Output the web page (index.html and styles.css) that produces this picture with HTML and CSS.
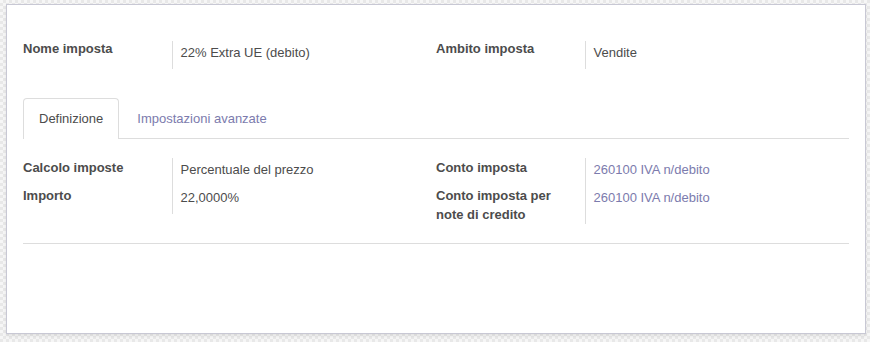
FILE: index.html
```html
<!DOCTYPE html>
<html lang="it">
<head>
<meta charset="utf-8">
<title>Imposta</title>
<link rel="stylesheet" href="styles.css">
</head>
<body>
<div class="sheet">
  <div class="group-row top-group">
    <table class="group">
      <tr>
        <td class="label"><span class="label-text">Nome imposta</span></td>
        <td class="value">22% Extra UE (debito)</td>
      </tr>
    </table>
    <table class="group">
      <tr>
        <td class="label"><span class="label-text">Ambito imposta</span></td>
        <td class="value">Vendite</td>
      </tr>
    </table>
  </div>

  <ul class="tabs">
    <li class="tab active">Definizione</li>
    <li class="tab link">Impostazioni avanzate</li>
  </ul>

  <div class="group-row tab-content">
    <table class="group">
      <tr>
        <td class="label">Calcolo imposte</td>
        <td class="value">Percentuale del prezzo</td>
      </tr>
      <tr>
        <td class="label">Importo</td>
        <td class="value">22,0000%</td>
      </tr>
    </table>
    <table class="group">
      <tr>
        <td class="label">Conto imposta</td>
        <td class="value"><a class="link">260100 IVA n/debito</a></td>
      </tr>
      <tr>
        <td class="label">Conto imposta per<br>note di credito</td>
        <td class="value"><a class="link">260100 IVA n/debito</a></td>
      </tr>
    </table>
  </div>
  <div class="rule"></div>
</div>
</body>
</html>
```

FILE: styles.css
```css
html, body {
  margin: 0;
  padding: 0;
}
body {
  width: 870px;
  height: 342px;
  overflow: hidden;
  font-family: "Liberation Sans", Arial, sans-serif;
  font-size: 13px;
  color: #4c4c4c;
  background-color: #f3f3f3;
  background-image: repeating-conic-gradient(#e8e8e8 0 25%, #f6f6f6 0 50%);
  background-size: 6px 6px;
  padding: 4px 4px 0 6px;
  box-sizing: border-box;
}
.sheet {
  box-sizing: border-box;
  width: 860px;
  height: 330px;
  background: #fff;
  border: 1px solid #c8c8d4;
  box-shadow: 0 2px 3px rgba(0, 0, 0, 0.08);
  padding: 36px 16px 0 16px;
}
.group-row {
  display: grid;
  grid-template-columns: 413px 413px;
  align-items: start;
}
.group {
  border-collapse: collapse;
  border-spacing: 0;
}
.group td {
  padding: 0;
  vertical-align: top;
  line-height: 19px;
}
.label {
  width: 149px;
  box-sizing: border-box;
  font-weight: bold;
  border-right: 1px solid #dddddd;
  padding: 0 8px 0 0 !important;
}
.label-text {
  position: relative;
  top: -2px;
}
.value {
  padding: 2px 0 7px 8px !important;
}
.tabs {
  list-style: none;
  margin: 29px 0 0 0;
  padding: 0;
  display: flex;
  border-bottom: 1px solid #dddddd;
  height: 40px;
}
.tab {
  padding: 10px 15px;
  line-height: 19px;
  margin-right: 2px;
  border: 1px solid transparent;
  border-bottom: none;
  border-radius: 4px 4px 0 0;
  height: 40px;
  box-sizing: border-box;
  margin-bottom: -1px;
}
.tab.active {
  border-color: #dddddd;
  background: #fff;
  height: 41px;
  color: #4c4c4c;
}
.link {
  color: #7c7bad;
  text-decoration: none;
}
.tab-content {
  margin-top: 19px;
}
.rule {
  margin-top: 19px;
  border-top: 1px solid #dddddd;
}
```
